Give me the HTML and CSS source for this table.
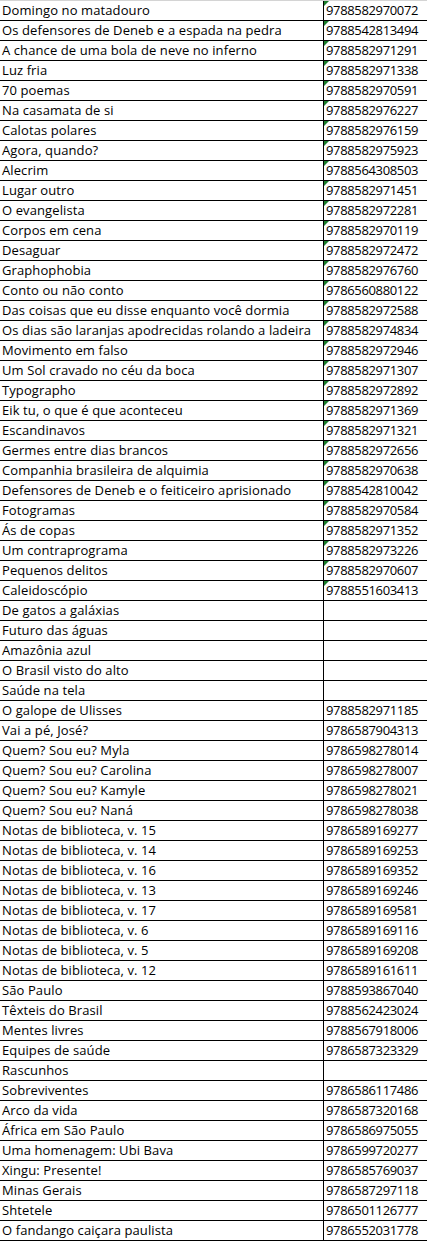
FILE: index.html
```html
<!DOCTYPE html>
<html lang="pt">
<head>
<meta charset="utf-8">
<title>Planilha</title>
<link rel="stylesheet" href="styles.css">
</head>
<body>
<div class="sheet">
<div class="row"><div class="title">Domingo no matadouro</div><div class="num flag">9788582970072</div></div>
<div class="row"><div class="title">Os defensores de Deneb e a espada na pedra</div><div class="num flag">9788542813494</div></div>
<div class="row"><div class="title">A chance de uma bola de neve no inferno</div><div class="num flag">9788582971291</div></div>
<div class="row"><div class="title">Luz fria</div><div class="num flag">9788582971338</div></div>
<div class="row"><div class="title">70 poemas</div><div class="num flag">9788582970591</div></div>
<div class="row"><div class="title">Na casamata de si</div><div class="num flag">9788582976227</div></div>
<div class="row"><div class="title">Calotas polares</div><div class="num flag">9788582976159</div></div>
<div class="row"><div class="title">Agora, quando?</div><div class="num flag">9788582975923</div></div>
<div class="row"><div class="title">Alecrim</div><div class="num flag">9788564308503</div></div>
<div class="row"><div class="title">Lugar outro</div><div class="num flag">9788582971451</div></div>
<div class="row"><div class="title">O evangelista</div><div class="num flag">9788582972281</div></div>
<div class="row"><div class="title">Corpos em cena</div><div class="num flag">9788582970119</div></div>
<div class="row"><div class="title">Desaguar</div><div class="num flag">9788582972472</div></div>
<div class="row"><div class="title">Graphophobia</div><div class="num flag">9788582976760</div></div>
<div class="row"><div class="title">Conto ou não conto</div><div class="num flag">9786560880122</div></div>
<div class="row"><div class="title">Das coisas que eu disse enquanto você dormia</div><div class="num flag">9788582972588</div></div>
<div class="row"><div class="title">Os dias são laranjas apodrecidas rolando a ladeira</div><div class="num flag">9788582974834</div></div>
<div class="row"><div class="title">Movimento em falso</div><div class="num flag">9788582972946</div></div>
<div class="row"><div class="title">Um Sol cravado no céu da boca</div><div class="num flag">9788582971307</div></div>
<div class="row"><div class="title">Typographo</div><div class="num flag">9788582972892</div></div>
<div class="row"><div class="title">Eik tu, o que é que aconteceu</div><div class="num flag">9788582971369</div></div>
<div class="row"><div class="title">Escandinavos</div><div class="num flag">9788582971321</div></div>
<div class="row"><div class="title">Germes entre dias brancos</div><div class="num flag">9788582972656</div></div>
<div class="row"><div class="title">Companhia brasileira de alquimia</div><div class="num flag">9788582970638</div></div>
<div class="row"><div class="title">Defensores de Deneb e o feiticeiro aprisionado</div><div class="num flag">9788542810042</div></div>
<div class="row"><div class="title">Fotogramas</div><div class="num flag">9788582970584</div></div>
<div class="row"><div class="title">Ás de copas</div><div class="num flag">9788582971352</div></div>
<div class="row"><div class="title">Um contraprograma</div><div class="num flag">9788582973226</div></div>
<div class="row"><div class="title">Pequenos delitos</div><div class="num flag">9788582970607</div></div>
<div class="row"><div class="title">Caleidoscópio</div><div class="num flag">9788551603413</div></div>
<div class="row"><div class="title">De gatos a galáxias</div><div class="num"></div></div>
<div class="row"><div class="title">Futuro das águas</div><div class="num"></div></div>
<div class="row"><div class="title">Amazônia azul</div><div class="num"></div></div>
<div class="row"><div class="title">O Brasil visto do alto</div><div class="num"></div></div>
<div class="row"><div class="title">Saúde na tela</div><div class="num"></div></div>
<div class="row"><div class="title">O galope de Ulisses</div><div class="num">9788582971185</div></div>
<div class="row"><div class="title">Vai a pé, José?</div><div class="num">9786587904313</div></div>
<div class="row"><div class="title">Quem? Sou eu? Myla</div><div class="num">9786598278014</div></div>
<div class="row"><div class="title">Quem? Sou eu? Carolina</div><div class="num">9786598278007</div></div>
<div class="row"><div class="title">Quem? Sou eu? Kamyle</div><div class="num">9786598278021</div></div>
<div class="row"><div class="title">Quem? Sou eu? Naná</div><div class="num">9786598278038</div></div>
<div class="row"><div class="title">Notas de biblioteca, v. 15</div><div class="num">9786589169277</div></div>
<div class="row"><div class="title">Notas de biblioteca, v. 14</div><div class="num">9786589169253</div></div>
<div class="row"><div class="title">Notas de biblioteca, v. 16</div><div class="num">9786589169352</div></div>
<div class="row"><div class="title">Notas de biblioteca, v. 13</div><div class="num">9786589169246</div></div>
<div class="row"><div class="title">Notas de biblioteca, v. 17</div><div class="num">9786589169581</div></div>
<div class="row"><div class="title">Notas de biblioteca, v. 6</div><div class="num">9786589169116</div></div>
<div class="row"><div class="title">Notas de biblioteca, v. 5</div><div class="num">9786589169208</div></div>
<div class="row"><div class="title">Notas de biblioteca, v. 12</div><div class="num">9786589161611</div></div>
<div class="row"><div class="title">São Paulo</div><div class="num">9788593867040</div></div>
<div class="row"><div class="title">Têxteis do Brasil</div><div class="num">9788562423024</div></div>
<div class="row"><div class="title">Mentes livres</div><div class="num">9788567918006</div></div>
<div class="row"><div class="title">Equipes de saúde</div><div class="num">9786587323329</div></div>
<div class="row"><div class="title">Rascunhos</div><div class="num"></div></div>
<div class="row"><div class="title">Sobreviventes</div><div class="num">9786586117486</div></div>
<div class="row"><div class="title">Arco da vida</div><div class="num">9786587320168</div></div>
<div class="row"><div class="title">África em São Paulo</div><div class="num">9786586975055</div></div>
<div class="row"><div class="title">Uma homenagem: Ubi Bava</div><div class="num">9786599720277</div></div>
<div class="row"><div class="title">Xingu: Presente!</div><div class="num">9786585769037</div></div>
<div class="row"><div class="title">Minas Gerais</div><div class="num">9786587297118</div></div>
<div class="row"><div class="title">Shtetele</div><div class="num">9786501126777</div></div>
<div class="row"><div class="title">O fandango caiçara paulista</div><div class="num">9786552031778</div></div>
</div>
</body>
</html>
```
FILE: styles.css
```css
html, body {
  margin: 0;
  padding: 0;
  background: #ffffff;
}

.sheet {
  width: 427px;
  border-top: 1px solid #d4d4d4;
  font-family: "Open Sans", "Noto Sans", sans-serif;
  font-size: 13px;
  color: #000000;
}

.row {
  display: grid;
  grid-template-columns: 323px 1fr;
  height: 20px;
  box-sizing: border-box;
  border-bottom: 1px solid #000000;
}

.title {
  padding-left: 2px;
  line-height: 19px;
  letter-spacing: 0.1px;
  white-space: nowrap;
  overflow: hidden;
}

.num {
  position: relative;
  border-left: 1px solid #000000;
  padding-left: 2px;
  line-height: 19px;
  letter-spacing: -0.35px;
  white-space: nowrap;
}

.flag::before {
  content: "";
  position: absolute;
  top: 0;
  left: 0;
  width: 0;
  height: 0;
  border-top: 5px solid #1b7d2b;
  border-right: 5px solid transparent;
}
```
